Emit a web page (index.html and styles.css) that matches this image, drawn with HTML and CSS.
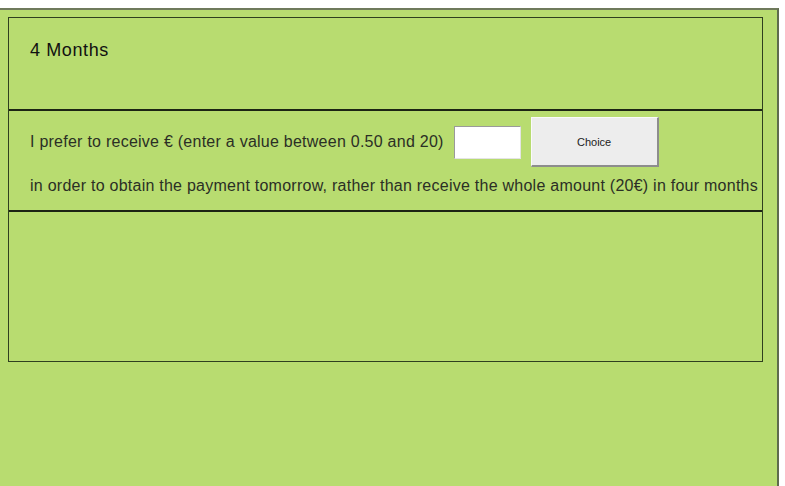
FILE: index.html
```html
<!DOCTYPE html>
<html lang="en">
<head>
    <meta charset="UTF-8">
    <title>4 Months</title>
    <link rel="stylesheet" href="styles.css">
</head>
<body>
    <div class="panel">
        <div class="frame">
            <!-- period title -->
            <div class="period">4 Months</div>

            <!-- question row -->
            <div class="question">
                <div class="ask">
                    <span>I prefer to receive € (enter a value between 0.50 and 20)</span>
                    <input type="text" class="amount">
                    <button class="choice">Choice</button>
                </div>
                <div class="rest">in order to obtain the payment tomorrow, rather than receive the whole amount (20€) in four months</div>
            </div>

            <div class="blank"></div>
        </div>
    </div>
</body>
</html>
```

FILE: styles.css
```css
body {
    margin: 0;
    background: #fff;
    font-family: "Liberation Sans", Arial, sans-serif;
    color: #2b2f25;
    overflow: hidden;
}

.panel {
    margin-top: 8px;
    width: 779px;
    height: 478px;
    background: #b8dc70;
    border-top: 2px solid #6f7a5c;
    border-right: 2px solid #5f6b4d;
    padding: 7px 0 0 8px;
    box-sizing: border-box;
}

.frame {
    width: 753px;
    border: 1px solid #2f3f1f;
}

.period {
    height: 93px;
    padding: 22px 0 0 21px;
    box-sizing: border-box;
    font-size: 18px;
    letter-spacing: 0.6px;
    color: #111;
    border-bottom: 2px solid #1c2414;
}

.question {
    height: 101px;
    box-sizing: border-box;
    padding: 6px 0 0 21px;
    font-size: 16px;
    letter-spacing: 0.25px;
    border-bottom: 2px solid #1c2414;
}

.ask {
    display: flex;
    align-items: center;
    height: 50px;
}

.amount {
    width: 67px;
    height: 33px;
    box-sizing: border-box;
    margin-left: 10px;
    border: 1px solid #9a9a9a;
    border-right-color: #e4e4e4;
    border-bottom-color: #e4e4e4;
    background: #fff;
}

.choice {
    width: 128px;
    height: 50px;
    margin-left: 10px;
    background: #ededed;
    border: 1px solid #fafafa;
    border-right: 2px solid #8d8d8d;
    border-bottom: 2px solid #8d8d8d;
    font-family: "Liberation Sans", Arial, sans-serif;
    font-size: 11px;
    letter-spacing: 0;
    color: #222;
    padding: 0;
}

.rest {
    margin-top: 10px;
    white-space: nowrap;
}

.blank {
    height: 149px;
}
```
